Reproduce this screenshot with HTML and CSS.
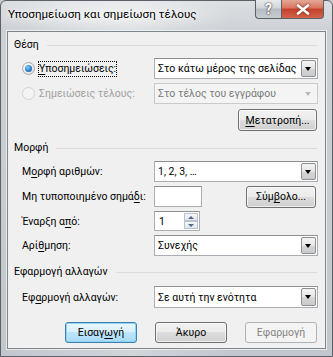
FILE: index.html
```html
<!DOCTYPE html>
<html lang="el">
<head>
    <meta charset="UTF-8">
    <title>Υποσημείωση και σημείωση τέλους</title>
    <link rel="stylesheet" href="styles.css">
</head>
<body>
    <div class="window">
        <div class="titlebar">
            <span class="title">Υποσημείωση και σημείωση τέλους</span>
            <div class="caption">
                <span class="cap-help">?</span>
                <span class="cap-close">
                    <svg width="14" height="11" viewBox="0 0 14 11"><path d="M2 1.5 L12 9.5 M12 1.5 L2 9.5" stroke="#fff" stroke-width="2.6" stroke-linecap="round"/></svg>
                </span>
            </div>
        </div>

        <div class="client">
            <!-- Θέση -->
            <div class="group-head">Θέση</div>
            <div class="row row-first">
                <label class="radio-label focus">
                    <span class="radio checked"></span>
                    <span class="focus-rect"><u>Υ</u>ποσημειώσεις:</span>
                </label>
                <div class="combo"><span class="combo-text">Στο κάτω μέρος της σελίδας</span><span class="combo-btn"></span></div>
            </div>
            <div class="row">
                <label class="radio-label disabled">
                    <span class="radio"></span>
                    <span>Σημειώσεις τέλους:</span>
                </label>
                <div class="combo disabled"><span class="combo-text">Στο τέλος του εγγράφου</span><span class="combo-btn"></span></div>
            </div>
            <div class="button-row">
                <button class="btn btn-convert"><u>Μ</u>ετατροπή...</button>
            </div>

            <!-- Μορφή -->
            <div class="group-head group-gap">Μορφή</div>
            <div class="row row-first">
                <span class="label">Μ<u>ο</u>ρφή αριθμών:</span>
                <div class="combo"><span class="combo-text">1, 2, 3, …</span><span class="combo-btn"></span></div>
            </div>
            <div class="row">
                <span class="label">Μη τυποποιημένο σημά<u>δ</u>ι:</span>
                <div class="textbox"></div>
                <button class="btn btn-symbol">Σύμ<u>β</u>ολο...</button>
            </div>
            <div class="row row-spin">
                <span class="label">Έναρξη α<u>π</u>ό:</span>
                <div class="spin">
                    <span class="spin-text">1</span>
                    <span class="spin-btns">
                        <span class="spin-up"></span>
                        <span class="spin-down"></span>
                    </span>
                </div>
            </div>
            <div class="row">
                <span class="label">Αρί<u>θ</u>μηση:</span>
                <div class="combo"><span class="combo-text">Συνεχής</span><span class="combo-btn"></span></div>
            </div>

            <!-- Εφαρμογή αλλαγών -->
            <div class="group-head group-gap2">Εφαρμογή αλλαγών</div>
            <div class="row row-apply">
                <span class="label">Εφ<u>α</u>ρμογή αλλαγών:</span>
                <div class="combo combo-tall"><span class="combo-text">Σε αυτή την ενότητα</span><span class="combo-btn"></span></div>
            </div>

            <div class="footer">
                <button class="btn btn-wide btn-default">Εισαγ<u>ω</u>γή</button>
                <button class="btn btn-wide">Άκυρο</button>
                <button class="btn btn-wide btn-disabled">Εφαρμογή</button>
            </div>
        </div>
    </div>
</body>
</html>
```

FILE: styles.css
```css
body {
    margin: 0;
    padding: 0;
    background-color: #c6cbd0;
    font-family: Roboto, 'Noto Sans', sans-serif;
    font-size: 10.5px;
    color: #000;
}

.window {
    box-sizing: border-box;
    width: 333px;
    height: 357px;
    padding: 0 6px 7px 6px;
    border: 1px solid #5c6167;
    border-radius: 6px 6px 0 0;
    background:
        radial-gradient(ellipse 120px 18px at 110px 14px, rgba(255, 255, 255, 0.55), rgba(255, 255, 255, 0) 100%),
        linear-gradient(90deg, rgba(255, 255, 255, 0) 0, rgba(255, 255, 255, 0.25) 40%, rgba(255, 255, 255, 0) 70%),
        linear-gradient(180deg, #dcdfe2 0, #cdd1d5 30px, #c2c7cc 100%);
    display: flex;
    flex-direction: column;
}

.titlebar {
    height: 30px;
    display: flex;
    align-items: flex-start;
    justify-content: space-between;
}

.title {
    margin-top: 6px;
    margin-left: 1px;
    font-size: 11.6px;
    color: #000;
    text-shadow: 0 0 6px #fff, 0 0 3px #fff;
}

.caption {
    display: flex;
    margin-right: 2px;
    margin-top: -1px;
}

.cap-help, .cap-close {
    height: 19px;
    box-sizing: border-box;
    border: 1px solid #5a6068;
    border-top: none;
    display: flex;
    align-items: center;
    justify-content: center;
}

.cap-help {
    width: 26px;
    border-right: none;
    border-radius: 0 0 0 4px;
    background: linear-gradient(180deg, #e8eaec 0, #d2d6da 45%, #b5bbc1 50%, #c8cdd2 100%);
    color: #fff;
    font-weight: bold;
    font-size: 14px;
    text-shadow: 0 0 2px #333, 0 0 1px #333;
}

.cap-close {
    width: 43px;
    border-radius: 0 0 4px 0;
    background: linear-gradient(180deg, #e4a796 0, #d9745e 45%, #c4402a 50%, #d4644a 100%);
}

.cap-close svg {
    filter: drop-shadow(0 0 1px #6a1f12);
}

.client {
    flex: 1;
    background-color: #f0f0f0;
    border: 1px solid #7d858d;
    box-shadow: 0 0 0 1px rgba(255, 255, 255, 0.6);
    padding: 5px 7px 0 6px;
}

.group-head {
    display: flex;
    align-items: center;
    height: 16px;
    line-height: 16px;
}

.group-head::after {
    content: "";
    flex: 1;
    margin-left: 8px;
    margin-right: 1px;
    border-top: 1px solid #dcdcdc;
}

.group-gap {
    margin-top: 9px;
}

.group-gap2 {
    margin-top: 8px;
}

.row {
    display: flex;
    align-items: center;
    height: 21px;
    margin-top: 4px;
    padding-left: 8px;
}

.row-first {
    margin-top: 5px;
}

.row-spin {
    height: 20px;
}

.row-apply {
    height: 22px;
    margin-top: 6px;
}

.label, .radio-label {
    width: 132px;
    flex-shrink: 0;
    white-space: nowrap;
}

.radio-label {
    display: flex;
    align-items: center;
    gap: 4px;
}

.radio-label.disabled {
    color: #a0a0a0;
}

.radio {
    box-sizing: border-box;
    width: 13px;
    height: 13px;
    border-radius: 50%;
    border: 1px solid #a8acb0;
    background: radial-gradient(circle at 40% 35%, #ffffff 0, #e8e9ea 60%, #d4d6d8 100%);
    flex-shrink: 0;
    position: relative;
}

.disabled .radio {
    border-color: #d4d4d4;
    background: #f4f4f4;
}

.radio.checked::after {
    content: "";
    position: absolute;
    left: 2px;
    top: 2px;
    width: 7px;
    height: 7px;
    border-radius: 50%;
    background: radial-gradient(circle at 40% 35%, #8ad0f5 0, #2a7fc9 55%, #0d4f9a 100%);
}

.focus-rect {
    outline: 1px dotted #000;
    outline-offset: 0;
    line-height: 14px;
}

.combo {
    box-sizing: border-box;
    width: 164px;
    height: 21px;
    border: 1px solid #abadb3;
    border-top-color: #8e8f8f;
    background-color: #fff;
    display: flex;
    align-items: center;
    justify-content: space-between;
    padding: 1px;
}

.combo-tall {
    height: 22px;
}

.combo-text {
    flex: 1;
    min-width: 0;
    overflow: hidden;
    padding-left: 2px;
    white-space: nowrap;
}

.combo-btn {
    box-sizing: border-box;
    width: 15px;
    height: 100%;
    flex-shrink: 0;
    border: 1px solid #8a8f94;
    border-radius: 2px;
    background: linear-gradient(180deg, #f4f4f4 0, #e6e6e6 50%, #d6d6d6 51%, #cbcbcb 100%);
    position: relative;
}

.combo-btn::after {
    content: "";
    position: absolute;
    left: 3px;
    top: 6px;
    border-left: 3.5px solid transparent;
    border-right: 3.5px solid transparent;
    border-top: 4px solid #000;
}

.combo.disabled {
    background-color: #f4f4f4;
    border-color: #c9cacc;
    color: #7a7a7a;
}

.combo.disabled .combo-btn {
    border-color: transparent;
    background: transparent;
}

.combo.disabled .combo-btn::after {
    border-top-color: #b8bcc0;
}

.textbox {
    box-sizing: border-box;
    width: 48px;
    height: 21px;
    background-color: #fff;
    border: 1px solid #abadb3;
    border-top-color: #8e8f8f;
}

.spin {
    box-sizing: border-box;
    width: 46px;
    height: 20px;
    background-color: #fff;
    border: 1px solid #abadb3;
    border-top-color: #8e8f8f;
    display: flex;
    align-items: center;
    justify-content: space-between;
    padding: 1px;
}

.spin-text {
    padding-left: 3px;
}

.spin-btns {
    width: 14px;
    height: 100%;
    display: flex;
    flex-direction: column;
}

.spin-up, .spin-down {
    flex: 1;
    box-sizing: border-box;
    border: 1px solid #b8c4d0;
    background: linear-gradient(180deg, #f6f8fa 0, #e2e7ec 100%);
    position: relative;
}

.spin-up::after, .spin-down::after {
    content: "";
    position: absolute;
    left: 3px;
    border-left: 3px solid transparent;
    border-right: 3px solid transparent;
}

.spin-up::after {
    top: 2px;
    border-bottom: 3px solid #4e6a88;
}

.spin-down::after {
    top: 2px;
    border-top: 3px solid #4e6a88;
}

.button-row {
    display: flex;
    justify-content: flex-end;
    margin-top: 5px;
    padding-right: 1px;
}

.btn {
    box-sizing: border-box;
    height: 22px;
    padding: 0 4px;
    font-family: inherit;
    font-size: 10.5px;
    color: #000;
    border: 1px solid #707070;
    border-radius: 3px;
    background: linear-gradient(180deg, #f2f2f2 0, #ebebeb 48%, #dddddd 50%, #cfcfcf 100%);
    box-shadow: inset 0 0 0 1px rgba(255, 255, 255, 0.7);
}

.btn-convert {
    width: 79px;
}

.btn-symbol {
    width: 70px;
    margin-left: auto;
    margin-right: 2px;
}

.footer {
    display: flex;
    justify-content: flex-end;
    gap: 18px;
    margin-top: 14px;
    padding-right: 1px;
}

.btn-wide {
    width: 72px;
    height: 21px;
}

.btn-default {
    border-color: #3c7fb1;
    background: linear-gradient(180deg, #eaf6fd 0, #d9f0fc 48%, #bee6fd 50%, #a7d9f5 100%);
    box-shadow: inset 0 0 0 1px #8fd3f5;
}

.btn-disabled {
    color: #838383;
    border-color: #adb2b5;
    background: #f4f4f4;
    box-shadow: none;
}

u {
    text-decoration: underline;
    text-underline-offset: 2px;
}
```
